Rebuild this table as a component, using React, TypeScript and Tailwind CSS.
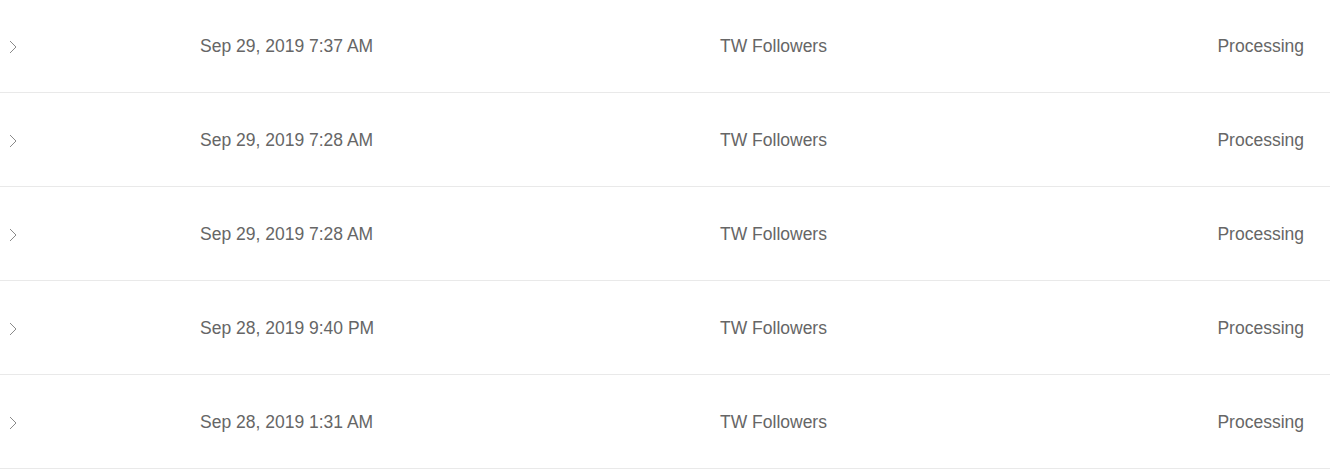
const rows = [
  { date: 'Sep 29, 2019 7:37 AM', service: 'TW Followers', status: 'Processing' },
  { date: 'Sep 29, 2019 7:28 AM', service: 'TW Followers', status: 'Processing' },
  { date: 'Sep 29, 2019 7:28 AM', service: 'TW Followers', status: 'Processing' },
  { date: 'Sep 28, 2019 9:40 PM', service: 'TW Followers', status: 'Processing' },
  { date: 'Sep 28, 2019 1:31 AM', service: 'TW Followers', status: 'Processing' },
]

function Chevron() {
  return (
    <svg width="8" height="14" viewBox="0 0 8 14" fill="none" className="text-[#8a8a8a]">
      <path d="M1 1l6 6-6 6" stroke="currentColor" strokeWidth="1" />
    </svg>
  )
}

export default function App() {
  return (
    <div className="-mt-px w-[1330px] bg-white font-['Liberation_Sans',Arial,sans-serif] text-[17.5px] text-[#666]">
      {rows.map((row, i) => (
        <div key={i} className="flex h-[94px] items-center border-b border-[#e9e9e9] pt-[2px]">
          <div className="flex w-[200px] items-center pl-[9px]">
            <Chevron />
          </div>
          <div className="w-[520px]">{row.date}</div>
          <div className="flex-1">{row.service}</div>
          <div className="pr-[26px] text-right">{row.status}</div>
        </div>
      ))}
    </div>
  )
}
